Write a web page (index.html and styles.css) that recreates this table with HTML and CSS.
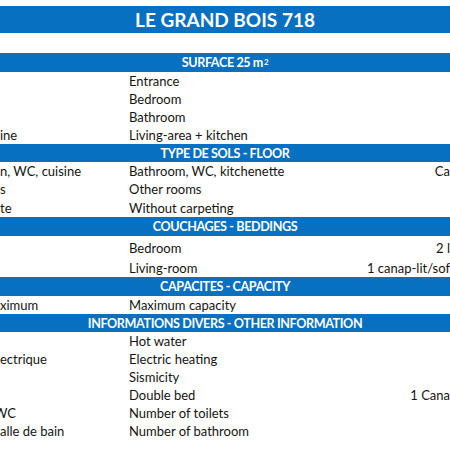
FILE: index.html
```html
<!DOCTYPE html>
<html lang="fr">
<head>
<meta charset="utf-8">
<title>Le Grand Bois 718</title>
<link rel="stylesheet" href="styles.css">
</head>
<body>
<div class="sheet">
  <div class="title">LE GRAND BOIS 718</div>
  <div class="blank"></div>

  <div class="band h19">SURFACE 25 m<sup>2</sup></div>
  <div class="row"><span class="c1"></span><span class="c2">Entrance</span><span class="c3"></span></div>
  <div class="row"><span class="c1"></span><span class="c2">Bedroom</span><span class="c3"></span></div>
  <div class="row"><span class="c1"></span><span class="c2">Bathroom</span><span class="c3"></span></div>
  <div class="row"><span class="c1">ine</span><span class="c2">Living-area + kitchen</span><span class="c3"></span></div>

  <div class="band">TYPE DE SOLS - FLOOR</div>
  <div class="row"><span class="c1">n, WC, cuisine</span><span class="c2">Bathroom, WC, kitchenette</span><span class="c3">Ca</span></div>
  <div class="row"><span class="c1">s</span><span class="c2">Other rooms</span><span class="c3"></span></div>
  <div class="row h19"><span class="c1">te</span><span class="c2">Without carpeting</span><span class="c3"></span></div>

  <div class="band h19">COUCHAGES - BEDDINGS</div>
  <div class="row h21"><span class="c1"></span><span class="c2">Bedroom</span><span class="c3">2 l</span></div>
  <div class="row h20"><span class="c1"></span><span class="c2">Living-room</span><span class="c3">1 canap-lit/sof</span></div>

  <div class="band h19">CAPACITES - CAPACITY</div>
  <div class="row"><span class="c1">ximum</span><span class="c2">Maximum capacity</span><span class="c3"></span></div>

  <div class="band">INFORMATIONS DIVERS - OTHER INFORMATION</div>
  <div class="row"><span class="c1"></span><span class="c2">Hot water</span><span class="c3"></span></div>
  <div class="row"><span class="c1">ectrique</span><span class="c2">Electric heating</span><span class="c3"></span></div>
  <div class="row"><span class="c1"></span><span class="c2">Sismicity</span><span class="c3"></span></div>
  <div class="row"><span class="c1"></span><span class="c2">Double bed</span><span class="c3">1 Cana</span></div>
  <div class="row"><span class="c1 cut">WC</span><span class="c2">Number of toilets</span><span class="c3"></span></div>
  <div class="row"><span class="c1">alle de bain</span><span class="c2">Number of bathroom</span><span class="c3"></span></div>
</div>
</body>
</html>
```

FILE: styles.css
```css
html, body {
  margin: 0;
  padding: 0;
  background: #ffffff;
}

body {
  width: 450px;
  height: 450px;
  overflow: hidden;
  font-family: Lato, "Open Sans", sans-serif;
  color: #141414;
}

.sheet {
  padding-top: 6px;
  display: flex;
  flex-direction: column;
}

.title {
  height: 27px;
  background: #0870c0;
  color: #ffffff;
  font-weight: 700;
  font-size: 19px;
  display: flex;
  align-items: center;
  justify-content: center;
}

.blank {
  height: 20px;
}

.band {
  height: 18px;
  background: #0870c0;
  color: #ffffff;
  font-weight: 700;
  font-size: 12.6px;
  letter-spacing: -0.4px;
  display: flex;
  align-items: center;
  justify-content: center;
  white-space: nowrap;
}

.band sup {
  font-size: 8px;
  line-height: 0;
  position: relative;
  top: -1px;
  margin-left: 1px;
}

.row {
  height: 18px;
  display: grid;
  grid-template-columns: 127px 1fr auto;
  align-items: end;
  font-size: 13px;
  line-height: 18px;
  white-space: nowrap;
}

.h19 { height: 19px; }
.h20 { height: 20px; }
.h21 { height: 21px; }

.c1 {
  overflow: hidden;
}

.c1.cut {
  text-indent: -6px;
}

.c2 {
  padding-left: 2px;
}

.c3 {
  text-align: right;
}
```
